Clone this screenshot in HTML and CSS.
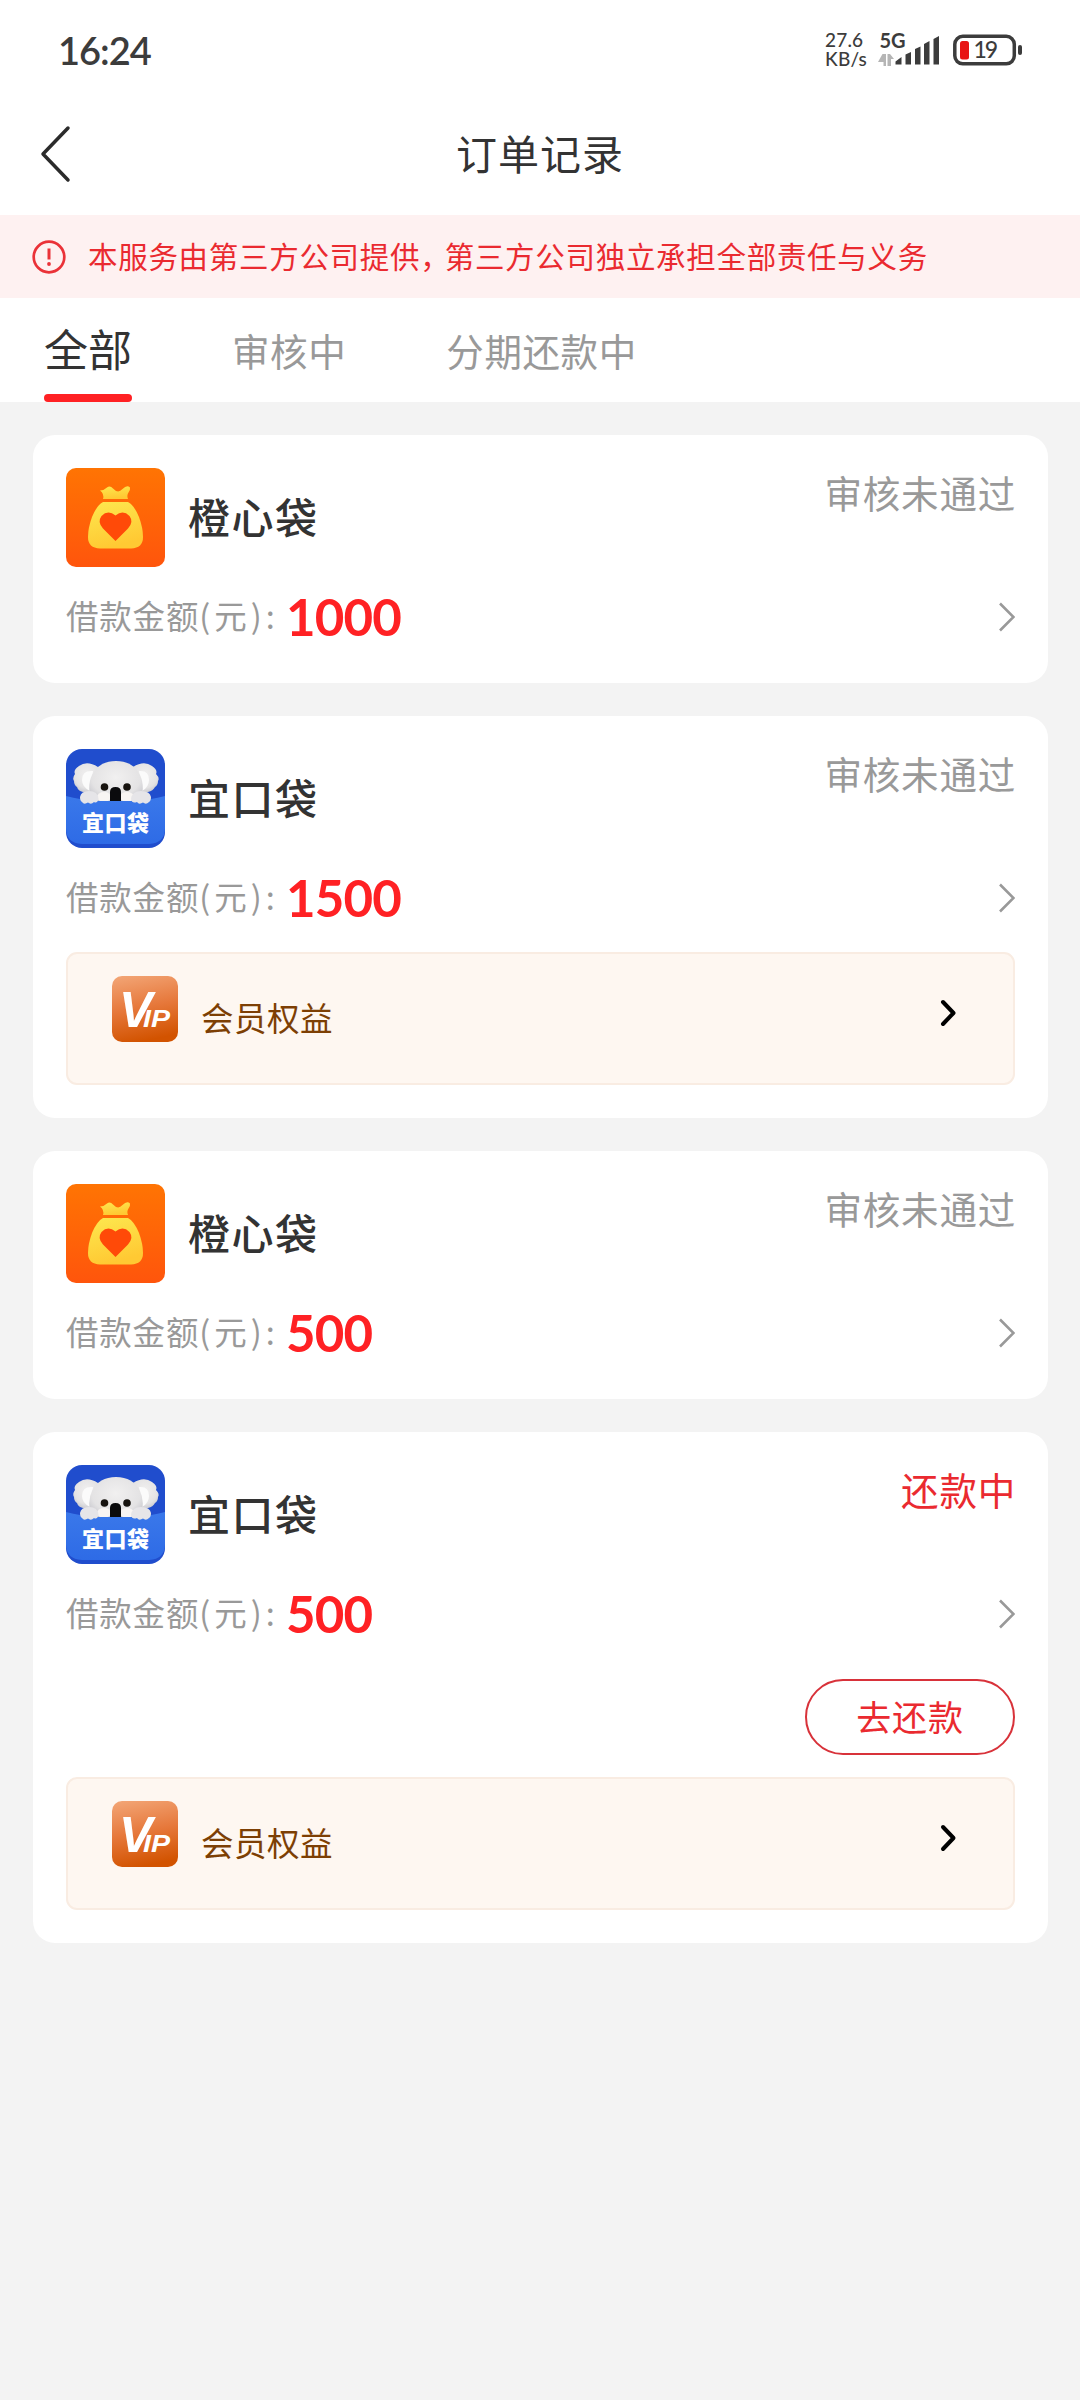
FILE: index.html
```html
<!DOCTYPE html>
<html lang="zh-CN">
<head>
  <meta charset="UTF-8">
  <meta name="viewport" content="width=device-width, initial-scale=1">
  <title>订单记录</title>
  <link rel="stylesheet" href="styles.css">
</head>
<body>

  <!-- shared icons -->
  <svg class="sprite" width="0" height="0">
    <defs>
      <linearGradient id="orangeBg" x1="0" y1="0" x2="0" y2="1">
        <stop offset="0" stop-color="#ff7403"/>
        <stop offset="1" stop-color="#ff550c"/>
      </linearGradient>
      <linearGradient id="gold" x1="0" y1="0" x2="0.3" y2="1">
        <stop offset="0" stop-color="#fde84f"/>
        <stop offset="1" stop-color="#ffc933"/>
      </linearGradient>
      <linearGradient id="pocketBg" x1="0" y1="0" x2="0" y2="1">
        <stop offset="0" stop-color="#3a78ea"/>
        <stop offset="1" stop-color="#2e6be6"/>
      </linearGradient>
      <radialGradient id="fur" cx="0.5" cy="0.4" r="0.65">
        <stop offset="0" stop-color="#f1f0f0"/>
        <stop offset="0.7" stop-color="#e4e3e4"/>
        <stop offset="1" stop-color="#c6c6cc"/>
      </radialGradient>
      <linearGradient id="vipBg" x1="0.2" y1="0" x2="0.4" y2="1">
        <stop offset="0" stop-color="#f2a373"/>
        <stop offset="0.5" stop-color="#e6783b"/>
        <stop offset="1" stop-color="#d25300"/>
      </linearGradient>
      <clipPath id="koalaClip"><rect width="99" height="99" rx="16"/></clipPath>
    </defs>
    <symbol id="bag" viewBox="0 0 99 99">
      <rect width="99" height="99" rx="10" fill="url(#orangeBg)"/>
      <path d="M37 31 Q38.500 26 34 22.500 Q38 22.500 41 19.500 Q44 17 47 20.500 Q52 26 56.500 21 Q61 16.500 64 19.500 Q64.500 22 62.500 24.500 Q60.500 27.500 62 31 Z" fill="url(#gold)"/>
      <path d="M37 34 H62 Q68 37 73 49 Q77 60 77 69 Q77 80 65 80.500 H34 Q22 80 22 69 Q22 60 26 49 Q31 37 37 34 Z" fill="url(#gold)"/>
      <path d="M49.500 73 L37 60.500 Q31 54 35.500 48 Q42 41.500 49.500 47.500 Q57 41.500 63.500 48 Q68 54 62 60.500 Z" fill="#ff4a08"/>
    </symbol>
    <symbol id="koala" viewBox="0 0 99 99">
      <g clip-path="url(#koalaClip)">
        <rect width="99" height="99" fill="#204dcd"/>
        <path d="M32 18 Q21 11 13 17 Q7 21 9 25 Q6 29 8 32 Q8 36 11 38 Q12 42 17 43 H34 Z" fill="url(#fur)"/>
        <path d="M67 18 Q78 11 86 17 Q92 21 90 25 Q94 29 92 32 Q92 36 89 38 Q87 42 82 43 H65 Z" fill="url(#fur)"/>
        <path d="M27 22 Q16 21 16 31 Q16 38 24 42 Z" fill="#fbfbfb"/>
        <path d="M73 22 Q83 21 83 31 Q83 38 76 42 Z" fill="#fbfbfb"/>
        <path d="M25 53 Q21 36 26 26 Q33 12 50 12 Q67 12 74 26 Q79 36 75 53 Z" fill="url(#fur)"/>
        <ellipse cx="38" cy="48" rx="7" ry="5" fill="#f8f5f3"/>
        <ellipse cx="61" cy="48" rx="7" ry="5" fill="#f8f5f3"/>
        <circle cx="38.500" cy="38" r="3.800" fill="#17130f"/>
        <circle cx="61" cy="38" r="3.800" fill="#17130f"/>
        <path d="M44 53 V43 Q44 38 49.500 38 Q55 38 55 43 V53 Z" fill="#0b0b0d"/>
        <path d="M0 47 Q14 51 33 52 H66 Q85 51 99 47 V79 Q99 94 83 95 H16 Q0 94 0 79 Z" fill="url(#pocketBg)"/>
        <path d="M14 48 Q15 42 23 42 Q32 42 32.500 50 Q31 55 28 53 Q25 56 22 53.500 Q18 56 16 53 Q14 52 14 48 Z" fill="#e6e5e8"/>
        <path d="M65 50 Q66 42 75 42 Q84 42 85 48 Q85 52 83 53 Q80 56 77 53.500 Q73 56 71 53 Q66 55 65 50 Z" fill="#e6e5e8"/>
        <text class="koala-text" x="16" y="82" textLength="67">宜口袋</text>
      </g>
    </symbol>
    <symbol id="vip" viewBox="0 0 66 66">
      <rect width="66" height="66" rx="10" fill="url(#vipBg)"/>
      <text class="vip-v" x="7" y="51">V</text>
      <text class="vip-ip" x="31" y="51" textLength="27" lengthAdjust="spacingAndGlyphs">IP</text>
    </symbol>
    <symbol id="more" viewBox="0 0 18 30">
      <path d="M3 1.500 L16.500 15 L3 28.500" fill="none" stroke="#999" stroke-width="2.600"/>
    </symbol>
    <symbol id="go" viewBox="0 0 18 30">
      <path d="M4 4 L14.500 15 L4 26" fill="none" stroke="#000" stroke-width="4" stroke-linecap="round" stroke-linejoin="round"/>
    </symbol>
  </svg>

  <div class="status-bar">
    <span class="time">16:24</span>
    <div class="status-right">
      <div class="speed"><span>27.6</span><span>KB/s</span></div>
      <svg class="signal" width="62" height="36" viewBox="0 0 62 36">
        <text class="net" x="1.500" y="17.500">5G</text>
        <path d="M4.500 24 h3.500 v12 h-2.500 v-4 h-5.500 z M9.500 24 h2.500 l4 5 h-3 v7 h-3.500 z" fill="#b5b5b5"/>
        <path d="M17.500 34.500 V31.500 L23.500 27 V34.500 Z M27.500 34.500 V24.500 L33 22 V34.500 Z M37 34.500 V19 L42.500 16.500 V34.500 Z M46 34.500 V14 L51.500 11 V34.500 Z M55.500 34.500 V9 L61 6 V34.500 Z" fill="#3c3c3c"/>
      </svg>
      <svg class="battery" width="70" height="32" viewBox="0 0 70 32">
        <rect x="1.800" y="2.300" width="59.500" height="27.500" rx="8" fill="none" stroke="#3c3c3c" stroke-width="3.500"/>
        <rect x="65" y="11" width="4" height="10" rx="2" fill="#3c3c3c"/>
        <rect x="7" y="7" width="9" height="18.500" rx="2.500" fill="#e81414"/>
        <text class="level" x="20.500" y="24">19</text>
      </svg>
    </div>
  </div>

  <header class="nav">
    <svg class="back" width="36" height="60" viewBox="0 0 36 60">
      <path d="M31 4 L6 30 L31 56" fill="none" stroke="#2b2b2b" stroke-width="3.500" stroke-linecap="round" stroke-linejoin="round"/>
    </svg>
    <h1>订单记录</h1>
  </header>

  <div class="notice">
    <svg width="34" height="34" viewBox="0 0 34 34">
      <circle cx="17" cy="17" r="15.300" fill="none" stroke="#ea3238" stroke-width="2.700"/>
      <path d="M17 8.500 V19.500" stroke="#ea3238" stroke-width="3"/>
      <circle cx="17" cy="24" r="1.900" fill="#ea3238"/>
    </svg>
    <p>本服务由第三方公司提供<span class="comma">，</span>第三方公司独立承担全部责任与义务</p>
  </div>

  <nav class="tabs">
    <a class="tab active">全部</a>
    <a class="tab">审核中</a>
    <a class="tab">分期还款中</a>
  </nav>

  <main class="orders">
    <section class="card">
      <div class="card-head">
        <svg class="logo"><use href="#bag"/></svg>
        <h2>橙心袋</h2>
        <span class="state">审核未通过</span>
      </div>
      <div class="card-amount">
        <span class="label">借款金额<span class="unit">(元):</span></span>
        <span class="amount">1000</span>
        <svg class="arrow"><use href="#more"/></svg>
      </div>
    </section>

    <section class="card">
      <div class="card-head">
        <svg class="logo"><use href="#koala"/></svg>
        <h2>宜口袋</h2>
        <span class="state">审核未通过</span>
      </div>
      <div class="card-amount">
        <span class="label">借款金额<span class="unit">(元):</span></span>
        <span class="amount">1500</span>
        <svg class="arrow"><use href="#more"/></svg>
      </div>
      <div class="member">
        <svg class="vip"><use href="#vip"/></svg>
        <span class="member-text">会员权益</span>
        <svg class="arrow"><use href="#go"/></svg>
      </div>
    </section>

    <section class="card">
      <div class="card-head">
        <svg class="logo"><use href="#bag"/></svg>
        <h2>橙心袋</h2>
        <span class="state">审核未通过</span>
      </div>
      <div class="card-amount">
        <span class="label">借款金额<span class="unit">(元):</span></span>
        <span class="amount">500</span>
        <svg class="arrow"><use href="#more"/></svg>
      </div>
    </section>

    <section class="card">
      <div class="card-head">
        <svg class="logo"><use href="#koala"/></svg>
        <h2>宜口袋</h2>
        <span class="state repaying">还款中</span>
      </div>
      <div class="card-amount">
        <span class="label">借款金额<span class="unit">(元):</span></span>
        <span class="amount">500</span>
        <svg class="arrow"><use href="#more"/></svg>
      </div>
      <button class="repay">去还款</button>
      <div class="member">
        <svg class="vip"><use href="#vip"/></svg>
        <span class="member-text">会员权益</span>
        <svg class="arrow"><use href="#go"/></svg>
      </div>
    </section>
  </main>

</body>
</html>
```

FILE: styles.css
```css
* {
  box-sizing: border-box;
}

body {
  margin: 0;
  min-height: 2400px;
  background: #f3f3f3;
  color: #333;
  font-family: "Noto Sans CJK SC", sans-serif;
}

h1, h2, p {
  margin: 0;
  font-weight: 400;
}

svg {
  display: block;
  flex-shrink: 0;
}

.sprite {
  position: absolute;
}

/* status bar */
.status-bar {
  display: flex;
  justify-content: space-between;
  height: 100px;
  padding: 0 57px 0 58px;
  background: #fff;
  color: #3c3c3c;
}

.time {
  margin-top: 27px;
  font-family: Lato, sans-serif;
  font-size: 38px;
  font-weight: 600;
  letter-spacing: -1px;
  line-height: 46px;
}

.status-right {
  display: flex;
  padding-top: 30px;
}

.speed {
  display: flex;
  flex-direction: column;
  width: 53px;
  font-family: Lato, sans-serif;
  font-size: 19px;
  font-weight: 500;
  letter-spacing: 0.2px;
  line-height: 19px;
}

.battery {
  margin: 4px 0 0 13px;
}

.net {
  font: 700 20px Lato, sans-serif;
  fill: #3c3c3c;
}

.level {
  font: 500 23px Lato, sans-serif;
  letter-spacing: -2px;
  fill: #3c3c3c;
}

/* title bar */
.nav {
  display: flex;
  align-items: center;
  height: 115px;
  padding: 0 37px 7px;
  background: #fff;
}

.nav h1 {
  flex: 1;
  margin: -4px 36px 0 0;
  font-size: 41px;
  letter-spacing: 1px;
  line-height: 60px;
  text-align: center;
}

.notice {
  display: flex;
  align-items: center;
  height: 83px;
  padding: 0 32px;
  background: #fef1f1;
  color: #ea2a30;
}

.notice p {
  margin: -3px 0 0 22px;
  font-size: 29.500px;
  letter-spacing: 0.700px;
  line-height: 44px;
}

.comma {
  letter-spacing: -5px;
}

/* tabs */
.tabs {
  display: flex;
  height: 104px;
  padding-left: 44px;
  background: #fff;
}

.tab {
  position: relative;
  margin-right: 100px;
  color: #999;
  font-size: 37.500px;
  letter-spacing: 0.600px;
  line-height: 103px;
}

.tab.active {
  color: #333;
  font-size: 44px;
  letter-spacing: 0;
  line-height: 100px;
}

.tab.active::after {
  content: "";
  position: absolute;
  left: 0;
  bottom: 0;
  width: 88px;
  height: 8px;
  border-radius: 4px;
  background: #ff2124;
}

/* order cards */
.orders {
  display: flex;
  flex-direction: column;
  gap: 33px;
  padding: 33px 32px 33px 33px;
}

.card {
  padding: 33px;
  border-radius: 22px;
  background: #fff;
}

.card-head {
  display: flex;
  align-items: center;
}

.logo {
  width: 99px;
  height: 99px;
}

.card-head h2 {
  margin: -4px 0 0 23px;
  font-size: 42px;
  font-weight: 500;
  letter-spacing: 1.500px;
  line-height: 60px;
}

.state {
  align-self: flex-start;
  margin: -3px -1px 0 auto;
  color: #999;
  font-size: 37.500px;
  letter-spacing: 0.800px;
  line-height: 54px;
}

.state.repaying {
  color: #ea2a30;
}

.card-amount {
  display: flex;
  align-items: center;
  height: 67px;
  margin-top: 16px;
}

.label {
  width: 220px;
  margin-top: -3px;
  color: #999;
  font-size: 32.500px;
  letter-spacing: 0.800px;
  line-height: 48px;
}

.unit {
  letter-spacing: 4px;
}

.amount {
  color: #ff2124;
  font-family: Lato, sans-serif;
  font-size: 51px;
  font-weight: 700;
  letter-spacing: -0.800px;
  line-height: 60px;
}

.arrow {
  width: 18px;
  height: 30px;
  margin-left: auto;
}

.repay {
  display: block;
  width: 210px;
  height: 76px;
  margin: 32px 0 0 auto;
  padding: 0 0 4px;
  border: 2px solid #d8323a;
  border-radius: 38px;
  background: #fff;
  color: #ea2a30;
  font-family: inherit;
  font-size: 35px;
  letter-spacing: 0.800px;
}

.repay + .member {
  margin-top: 22px;
}

/* vip strip */
.member {
  display: flex;
  align-items: flex-start;
  height: 133px;
  margin-top: 21px;
  padding: 22px 56px 0 44px;
  border: 2px solid #f9ece2;
  border-radius: 11px;
  background: #fef7f1;
}

.vip {
  width: 66px;
  height: 66px;
}

.member-text {
  margin: 17px 0 0 23px;
  color: #7d3f04;
  font-size: 32.500px;
  letter-spacing: 0.500px;
  line-height: 48px;
}

.member .arrow {
  margin-top: 22px;
}

.koala-text {
  font: 900 22px "Noto Sans CJK SC", sans-serif;
  fill: #fff;
}

.vip-v {
  font: italic 700 50px "Liberation Sans", sans-serif;
  fill: #fff;
}

.vip-ip {
  font: italic 700 24px "Liberation Sans", sans-serif;
  fill: #fff;
}
```
